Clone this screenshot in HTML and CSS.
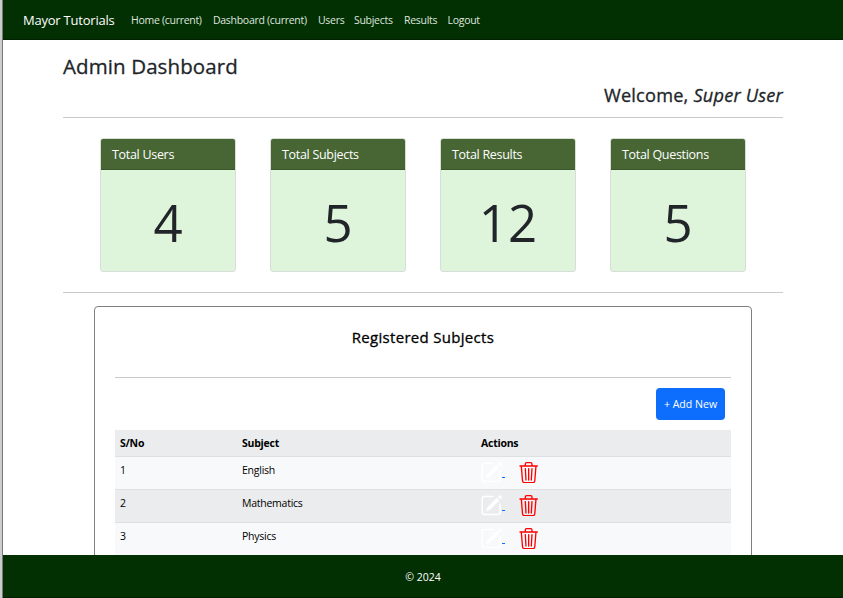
FILE: index.html
```html
<!DOCTYPE html>
<html lang="en">
<head>
<meta charset="utf-8">
<title>Admin Dashboard</title>
<link rel="stylesheet" href="styles.css">
</head>
<body>
<svg class="defs" aria-hidden="true">
  <symbol id="edit" viewBox="0 0 20 20">
    <path d="M12 1.5H3A1.8 1.8 0 0 0 1.2 3.3v13.4A1.8 1.8 0 0 0 3 18.500h13.400a1.800 1.800 0 0 0 1.800-1.800V8" fill="none" stroke="currentColor" stroke-width="1.500"/>
    <path d="M15 2.700l2.500 2.500L8.500 14l-3.900 1.600L6.100 11.600zM16 1.700l1.200-1.200q.6-.5 1.200 0l1.200 1.200q.5.600 0 1.200L18.500 4.200z" fill="currentColor"/>
  </symbol>
  <symbol id="trash" viewBox="0 0 16 16">
    <path fill="currentColor" d="M6.500 1h3a.5.5 0 0 1 .5.5v1H6v-1a.5.5 0 0 1 .5-.5M11 2.500v-1A1.500 1.500 0 0 0 9.500 0h-3A1.500 1.500 0 0 0 5 1.500v1H1.500a.5.5 0 0 0 0 1h.538l.853 10.660A2 2 0 0 0 4.885 16h6.230a2 2 0 0 0 1.994-1.840l.853-10.660h.538a.5.5 0 0 0 0-1zm1.958 1-.846 10.580a1 1 0 0 1-.997.920h-6.230a1 1 0 0 1-.997-.920L3.042 3.500zm-7.487 1a.5.5 0 0 1 .528.470l.5 8.500a.5.5 0 0 1-.998.060L5 5.030a.5.5 0 0 1 .470-.530Zm5.058 0a.5.5 0 0 1 .470.530l-.5 8.500a.5.5 0 1 1-.998-.060l.5-8.500a.5.5 0 0 1 .528-.470M8 4.500a.5.5 0 0 1 .5.5v8.500a.5.5 0 0 1-1 0V5a.5.5 0 0 1 .5-.5"/>
  </symbol>
</svg>
<div class="page">
  <nav class="navbar">
    <a class="brand">Mayor Tutorials</a>
    <a class="link home">Home (current)</a>
    <a class="link dash">Dashboard (current)</a>
    <a class="link users">Users</a>
    <a class="link subjects">Subjects</a>
    <a class="link results">Results</a>
    <a class="link logout">Logout</a>
  </nav>
  <main class="container">
    <h1>Admin Dashboard</h1>
    <h2>Welcome, <em>Super User</em></h2>
    <section class="stats">
      <div class="card"><div class="card-head"><span>Total Users</span></div><div class="card-body">4</div></div>
      <div class="card"><div class="card-head"><span>Total Subjects</span></div><div class="card-body">5</div></div>
      <div class="card"><div class="card-head"><span>Total Results</span></div><div class="card-body">12</div></div>
      <div class="card"><div class="card-head"><span>Total Questions</span></div><div class="card-body">5</div></div>
    </section>
    <section class="panel">
      <h3>Registered Subjects</h3>
      <div class="toolbar"><button class="add">+ Add New</button></div>
      <div class="table">
        <div class="row head"><span>S/No</span><span>Subject</span><span>Actions</span></div>
        <div class="row odd"><span>1</span><span>English</span><span class="actions"><svg class="edit"><use href="#edit"/></svg><i class="dash-mark"></i><svg class="trash"><use href="#trash"/></svg></span></div>
        <div class="row even"><span>2</span><span>Mathematics</span><span class="actions"><svg class="edit"><use href="#edit"/></svg><i class="dash-mark"></i><svg class="trash"><use href="#trash"/></svg></span></div>
        <div class="row odd"><span>3</span><span>Physics</span><span class="actions"><svg class="edit"><use href="#edit"/></svg><i class="dash-mark"></i><svg class="trash"><use href="#trash"/></svg></span></div>
      </div>
    </section>
  </main>
  <footer>© 2024</footer>
</div>
</body>
</html>
```
FILE: styles.css
```css
* { box-sizing: border-box; }
body { margin: 0; height: 598px; overflow: hidden; background: #ccc; padding-left: 2px; font-family: "Open Sans", "Noto Sans", sans-serif; font-size: 10.5px; color: #212529; }
.defs { display: none; }
.page { height: 598px; display: flex; flex-direction: column; background: #fff; border-left: 1px solid #777; }
.navbar { height: 40px; flex: none; background: #033003; border-bottom: 1px solid #022002; display: flex; align-items: center; padding-left: 20px; white-space: nowrap; }
.brand { width: 108px; color: #fff; font-size: 13px; letter-spacing: -0.22px; }
.link { color: #dfe5df; letter-spacing: -0.29px; }
.home { width: 82px; }
.dash { width: 105px; }
.users { width: 36px; }
.subjects { width: 50px; }
.results { width: 43.500px; }
.container { flex: 1; min-height: 0; overflow: hidden; padding: 0 60px; }
h1, h2, h3 { margin: 0; font-weight: 500; white-space: nowrap; -webkit-text-stroke: 0.3px currentColor; }
h1 { font-size: 20.500px; line-height: 28px; padding-top: 12px; letter-spacing: 0.1px; }
h2 { font-size: 18.200px; line-height: 24px; margin-top: 3px; text-align: right; letter-spacing: 0.2px; }
.stats { margin-top: 10px; padding: 20px 37px 20px; height: 176px; border-top: 1px solid #c8c9ca; border-bottom: 1px solid #c8c9ca; display: flex; justify-content: space-between; }
.card { width: 136px; height: 134px; border: 1px solid #d9ddd9; border-radius: 3px; background: #dff5db; overflow: hidden; }
.card-head { height: 31px; line-height: 31px; padding-left: 11px; background: #486634; border-bottom: 1px solid #3b552b; color: #fff; font-size: 12.500px; letter-spacing: -0.3px; }
.card-body { height: 101px; line-height: 105px; text-align: center; font-size: 51px; font-weight: 400; }
.panel { width: 658px; height: 300px; margin: 13px auto 0; padding: 0 20px; border: 1px solid #808080; border-radius: 4px; }
h3 { height: 71px; line-height: 61px; font-size: 15px; letter-spacing: 0.3px; color: #000; text-align: center; border-bottom: 1px solid #c8c9ca; }
.toolbar { height: 52px; padding: 10px 6px 0 0; display: flex; justify-content: flex-end; }
.add { width: 69px; height: 32px; padding: 0; border: 0; border-radius: 4px; background: #0d6efd; color: #fff; font: 10.600px "Open Sans", sans-serif; letter-spacing: -0.02px; }
.row { display: grid; grid-template-columns: 122px 239px 1fr; height: 33px; padding-left: 5px; line-height: 26px; border-bottom: 1px solid #dfe0e1; color: #000; letter-spacing: -0.25px; }
.head { height: 27px; font-weight: 700; background: #ebeced; }
.odd { background: #f8f9fa; }
.even { background: #ebeced; }
.actions { display: flex; align-items: flex-start; padding-top: 5px; }
.edit { width: 21px; height: 21px; color: #fff; }
.dash-mark { width: 3px; height: 1px; margin: 15px 13px 0 0; background: #0d6efd; }
.trash { width: 21.300px; height: 21.300px; color: #f00; }
footer { height: 43px; flex: none; background: #033003; border-bottom: 1px solid #022002; color: #fff; text-align: center; line-height: 44px; }
```
